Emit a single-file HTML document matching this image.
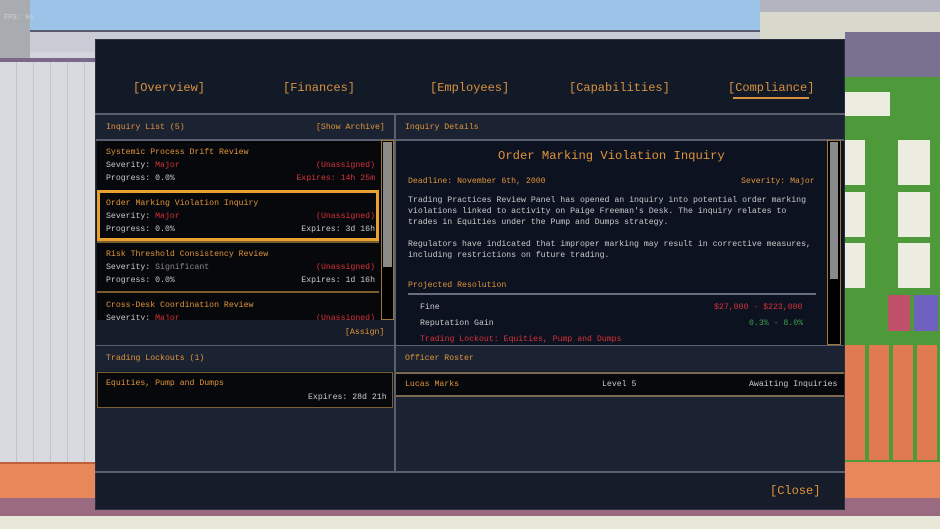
<!DOCTYPE html>
<html><head><meta charset="utf-8"><style>
*{margin:0;padding:0;box-sizing:border-box}
body{width:940px;height:529px;position:relative;overflow:hidden;background:#d4d4dc;font-family:"Liberation Mono",monospace;font-size:8.2px;color:#c9c9c9}
div{position:absolute}
.o{color:#e0943a}.r{color:#d8323a}.g{color:#3fa04a}.w{color:#cfcfcf}
.hd{background:#1b2232;color:#e0943a}
.item{background:#07080b;left:97px;width:282px;height:50px;border-top:2px solid #7a5e30}
.item span{position:absolute}
</style></head><body>
<!-- background scene -->
<div style="left:0;top:0;width:760px;height:40px;background:#9cc4e8"></div>
<div style="left:0;top:0;width:30px;height:58px;background:#a8abb0"></div>
<div style="left:30px;top:30px;width:730px;height:22px;background:#c9ccd4;border-top:2px solid #5a5a70"></div>
<div style="left:0;top:58px;width:95px;height:4px;background:#7a6888"></div>
<div style="left:0;top:62px;width:95px;height:400px;background:repeating-linear-gradient(90deg,#d9d9e0 0 16px,#c4c4cc 16px 17px),#d9d9e0"></div>
<div style="left:0;top:462px;width:95px;height:36px;background:#e8875a;border-top:2px solid #c0603a"></div>
<div style="left:0;top:498px;width:940px;height:18px;background:#9a6a80"></div>
<div style="left:0;top:516px;width:940px;height:13px;background:#e8e8d8"></div>
<div style="left:760px;top:0;width:180px;height:40px;background:#d8d8cc;border-top:12px solid #b4b4c0"></div>
<div style="left:845px;top:32px;width:95px;height:45px;background:#7a7090"></div>
<div style="left:845px;top:77px;width:95px;height:385px;background:#4e9a3a"></div>
<div style="left:845px;top:92px;width:45px;height:24px;background:#ecece0"></div>
<div style="left:845px;top:140px;width:20px;height:45px;background:#ecece0"></div>
<div style="left:898px;top:140px;width:32px;height:45px;background:#ecece0"></div>
<div style="left:845px;top:192px;width:20px;height:45px;background:#ecece0"></div>
<div style="left:898px;top:192px;width:32px;height:45px;background:#ecece0"></div>
<div style="left:845px;top:243px;width:20px;height:45px;background:#ecece0"></div>
<div style="left:898px;top:243px;width:32px;height:45px;background:#ecece0"></div>
<div style="left:888px;top:295px;width:22px;height:36px;background:#c0506a"></div>
<div style="left:914px;top:295px;width:24px;height:36px;background:#7060c0"></div>
<div style="left:845px;top:345px;width:95px;height:115px;background:repeating-linear-gradient(90deg,#e07a50 0 20px,#4e9a3a 20px 24px)"></div>
<div style="left:845px;top:462px;width:95px;height:36px;background:#e8875a"></div>
<div style="left:4px;top:14px;color:#d0d0d0;font-size:7px">FPS: 94</div>

<!-- modal -->
<div style="left:95px;top:39px;width:750px;height:471px;background:#131a27;border:1px solid #2a3040"></div>
<div style="left:133px;top:81px;font-size:12px;color:#d9913f">[Overview]</div>
<div style="left:283px;top:81px;font-size:12px;color:#d9913f">[Finances]</div>
<div style="left:430px;top:81px;font-size:12px;color:#d9913f">[Employees]</div>
<div style="left:569px;top:81px;font-size:12px;color:#d9913f">[Capabilities]</div>
<div style="left:728px;top:81px;font-size:12px;color:#d9913f">[Compliance]</div>
<div style="left:733px;top:97px;width:76px;height:2px;background:#d9913f"></div>
<div style="left:95px;top:113px;width:750px;height:2px;background:#5a6070"></div>

<!-- left column -->
<div class="hd" style="left:96px;top:115px;width:298px;height:25px"></div>
<div class="o" style="left:106px;top:123px">Inquiry List (5)</div>
<div class="o" style="left:316px;top:123px">[Show Archive]</div>
<div style="left:96px;top:139px;width:298px;height:2px;background:#5a6070"></div>
<div style="left:97px;top:141px;width:296px;height:179px;background:#07080b"></div>
<div class="item" style="top:141px;border-top:none"><span class="o" style="left:9px;top:7px">Systemic Process Drift Review</span><span style="left:9px;top:20px">Severity: <b class="r" style="font-weight:normal">Major</b></span><span class="r" style="right:4px;top:20px">(Unassigned)</span><span style="left:9px;top:33px">Progress: 0.0%</span><span class="r" style="right:4px;top:33px">Expires: 14h 25m</span></div>
<div class="item" style="top:190px;border:3px solid #e8a030;height:51px"><span class="o" style="left:6px;top:6px">Order Marking Violation Inquiry</span><span style="left:6px;top:19px">Severity: <b class="r" style="font-weight:normal">Major</b></span><span class="r" style="right:1px;top:19px">(Unassigned)</span><span style="left:6px;top:32px">Progress: 0.0%</span><span style="right:1px;top:32px">Expires: 3d 16h</span></div>
<div class="item" style="top:241px"><span class="o" style="left:9px;top:7px">Risk Threshold Consistency Review</span><span style="left:9px;top:20px">Severity: <b style="font-weight:normal;color:#888">Significant</b></span><span class="r" style="right:4px;top:20px">(Unassigned)</span><span style="left:9px;top:33px">Progress: 0.0%</span><span style="right:4px;top:33px">Expires: 1d 16h</span></div>
<div class="item" style="top:291px;height:29px;overflow:hidden"><span class="o" style="left:9px;top:8px">Cross-Desk Coordination Review</span><span style="left:9px;top:21px">Severity: <b class="r" style="font-weight:normal">Major</b></span><span class="r" style="right:4px;top:21px">(Unassigned)</span></div>
<div style="left:381px;top:140px;width:13px;height:180px;border:1px solid #a07838;background:#000"></div>
<div style="left:383px;top:142px;width:9px;height:125px;background:#8a8a8a"></div>
<div style="left:96px;top:320px;width:298px;height:26px;background:#161c2a"></div>
<div class="o" style="left:345px;top:328px">[Assign]</div>
<div style="left:96px;top:345px;width:298px;height:1px;background:#5a6070"></div>
<div class="hd" style="left:96px;top:346px;width:298px;height:25px"></div>
<div class="o" style="left:106px;top:354px">Trading Lockouts (1)</div>
<div style="left:97px;top:372px;width:296px;height:36px;background:#07080b;border:1px solid #7a6030"></div>
<div class="o" style="left:106px;top:379px">Equities, Pump and Dumps</div>
<div style="left:308px;top:393px">Expires: 28d 21h</div>
<div style="left:96px;top:408px;width:298px;height:63px;background:#1b2232"></div>

<div style="left:394px;top:115px;width:2px;height:357px;background:#5a6070"></div>

<!-- right column -->
<div class="hd" style="left:396px;top:115px;width:448px;height:25px"></div>
<div class="o" style="left:405px;top:123px">Inquiry Details</div>
<div style="left:396px;top:139px;width:448px;height:2px;background:#5a6070"></div>
<div style="left:396px;top:141px;width:448px;height:204px;background:#0c1220"></div>
<div class="o" style="left:498px;top:149px;font-size:12.2px">Order Marking Violation Inquiry</div>
<div class="o" style="left:408px;top:177px">Deadline: November 6th, 2000</div>
<div class="o" style="left:741px;top:177px">Severity: Major</div>
<div style="left:408px;top:195px;line-height:11px;width:420px">Trading Practices Review Panel has opened an inquiry into potential order marking<br>violations linked to activity on Paige Freeman's Desk. The inquiry relates to<br>trades in Equities under the Pump and Dumps strategy.</div>
<div style="left:408px;top:239px;line-height:11px;width:420px">Regulators have indicated that improper marking may result in corrective measures,<br>including restrictions on future trading.</div>
<div class="o" style="left:408px;top:281px">Projected Resolution</div>
<div style="left:408px;top:293px;width:408px;height:2px;background:#6a7080"></div>
<div style="left:420px;top:303px">Fine</div>
<div class="r" style="left:714px;top:303px">$27,000 - $223,000</div>
<div style="left:420px;top:319px">Reputation Gain</div>
<div class="g" style="left:749px;top:319px">0.3% - 8.0%</div>
<div class="r" style="left:420px;top:335px">Trading Lockout: Equities, Pump and Dumps</div>
<div style="left:827px;top:140px;width:14px;height:205px;border:1px solid #a07838;background:#000"></div>
<div style="left:830px;top:142px;width:8px;height:137px;background:#8a8a8a"></div>
<div style="left:396px;top:345px;width:448px;height:1px;background:#5a6070"></div>
<div class="hd" style="left:396px;top:346px;width:448px;height:25px"></div>
<div class="o" style="left:405px;top:354px">Officer Roster</div>
<div style="left:396px;top:372px;width:448px;height:25px;background:#07080b;border-top:2px solid #7a6a50;border-bottom:2px solid #7a6a50"></div>
<div class="o" style="left:405px;top:380px">Lucas Marks</div>
<div style="left:602px;top:380px">Level 5</div>
<div style="left:749px;top:380px">Awaiting Inquiries</div>
<div style="left:396px;top:397px;width:448px;height:74px;background:#1b2232"></div>

<div style="left:95px;top:471px;width:750px;height:2px;background:#5a6070"></div>
<div style="left:96px;top:473px;width:748px;height:36px;background:#161c2a"></div>
<div class="o" style="left:770px;top:484px;font-size:12px">[Close]</div>
</body></html>
